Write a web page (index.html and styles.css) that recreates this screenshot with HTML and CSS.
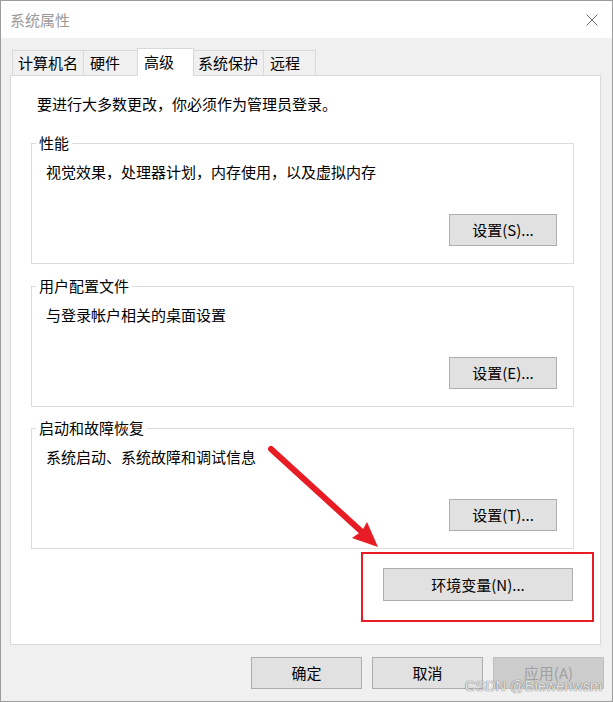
FILE: index.html
```html
<!DOCTYPE html>
<html lang="zh-CN">
<head>
<meta charset="utf-8">
<title>系统属性</title>
<link rel="stylesheet" href="styles.css">
</head>
<body>
<div class="window">
  <div class="titlebar">
    <span class="title">系统属性</span>
    <svg class="close" width="12" height="12" viewBox="0 0 12 12"><path d="M0.5 0.5L11.5 11.5M11.5 0.5L0.5 11.5" stroke="#6e6e6e" stroke-width="1" fill="none"/></svg>
  </div>
  <div class="content">
    <div class="tabs">
      <div class="tab t1">计算机名</div>
      <div class="tab t2">硬件</div>
      <div class="tab t3 active">高级</div>
      <div class="tab t4">系统保护</div>
      <div class="tab t5">远程</div>
    </div>
    <div class="panel">
      <div class="intro">要进行大多数更改，你必须作为管理员登录。</div>
      <div class="group g1">
        <div class="legend">性能</div>
        <div class="desc">视觉效果，处理器计划，内存使用，以及虚拟内存</div>
        <button class="btn set">设置(S)...</button>
      </div>
      <div class="group g2">
        <div class="legend">用户配置文件</div>
        <div class="desc">与登录帐户相关的桌面设置</div>
        <button class="btn set">设置(E)...</button>
      </div>
      <div class="group g3">
        <div class="legend">启动和故障恢复</div>
        <div class="desc">系统启动、系统故障和调试信息</div>
        <button class="btn set">设置(T)...</button>
      </div>
      <button class="btn env">环境变量(N)...</button>
    </div>
    <div class="footer">
      <button class="btn foot">确定</button>
      <button class="btn foot">取消</button>
      <button class="btn foot disabled">应用(A)</button>
    </div>
  </div>
  <svg class="annot" width="613" height="702" viewBox="0 0 613 702">
    <line x1="271" y1="449" x2="362" y2="532" stroke="#e81c24" stroke-width="6" stroke-linecap="round"/>
    <polygon points="378,547 352,538 362,531 367,522" fill="#e81c24"/>
    <rect x="362" y="553" width="231" height="68" fill="none" stroke="#e81c24" stroke-width="2"/>
  </svg>
  <div class="watermark">CSDN @Biewenwsm</div>
</div>
</body>
</html>
```
FILE: styles.css
```css
html, body {
  margin: 0;
  padding: 0;
  background: #ffffff;
}
body {
  font-family: "Noto Sans CJK SC", "Noto Sans", sans-serif;
  font-size: 15px;
  color: #000;
}
.window {
  position: relative;
  width: 613px;
  height: 702px;
  box-sizing: border-box;
  border: 1px solid #9c9c9c;
  background: #f0f0f0;
  display: flex;
  flex-direction: column;
  overflow: hidden;
}
.titlebar {
  height: 37px;
  flex: none;
  background: #fff;
  display: flex;
  align-items: center;
  justify-content: space-between;
  padding: 0 14px 0 9px;
}
.title {
  color: #9a9a9a;
  font-size: 15px;
  line-height: 20px;
}
.close { display: block; }
.content {
  flex: 1;
  display: flex;
  flex-direction: column;
  padding: 12px 10px 0 9px;
}
.tabs {
  display: flex;
  align-items: flex-end;
  height: 25px;
  padding-left: 2px;
}
.tab {
  box-sizing: border-box;
  height: 25px;
  border: 1px solid #d9d9d9;
  border-bottom: none;
  background: #f0f0f0;
  line-height: 23px;
  padding-left: 6px;
  margin-left: -1px;
  white-space: nowrap;
}
.t1 { width: 72px; margin-left: 0; padding-left: 5px; }
.t2 { width: 55px; }
.t3 { width: 57px; }
.t4 { width: 71px; padding-left: 4px; }
.t5 { width: 53px; }
.tab.active {
  position: relative;
  z-index: 1;
  height: 28px;
  margin-bottom: -1px;
  background: #fff;
  line-height: 26px;
}
.panel {
  box-sizing: border-box;
  height: 570px;
  margin-right: 1px;
  background: #fff;
  border: 1px solid #d9d9d9;
  padding: 18px 26px 0 20px;
  display: flex;
  flex-direction: column;
}
.intro {
  line-height: 20px;
  margin-left: 6px;
}
.group {
  box-sizing: border-box;
  height: 121px;
  border: 1px solid #dcdcdc;
  padding: 0 16px 17px 14px;
  display: flex;
  flex-direction: column;
  margin-top: 22px;
}
.g1 { margin-top: 29px; }
.g3 { margin-top: 21px; }
.legend {
  align-self: flex-start;
  margin-top: -11px;
  margin-left: -10px;
  padding: 0 3px;
  background: #fff;
  line-height: 20px;
}
.desc {
  line-height: 20px;
  margin-top: 9px;
}
.btn {
  font-family: "Noto Sans CJK SC", "Noto Sans", sans-serif;
  font-size: 15px;
  color: #000;
  background: #e1e1e1;
  border: 1px solid #adadad;
  box-sizing: border-box;
  padding: 0;
  margin: 0;
  line-height: 20px;
}
.set {
  width: 108px;
  height: 32px;
  margin-top: auto;
  align-self: flex-end;
}
.env {
  width: 190px;
  height: 33px;
  align-self: flex-end;
  margin-top: 19px;
  margin-right: 1px;
}
.footer {
  display: flex;
  justify-content: flex-end;
  gap: 10px;
  padding-top: 12px;
  margin-right: -2px;
}
.foot {
  width: 111px;
  height: 32px;
}
.foot.disabled {
  background: #cccccc;
  border-color: #bfbfbf;
  color: #a0a0a0;
}
.annot {
  position: absolute;
  left: -1px;
  top: -1px;
  pointer-events: none;
}
.watermark {
  position: absolute;
  left: 464px;
  top: 676px;
  font-family: "Liberation Sans", Arial, sans-serif;
  font-size: 14.5px;
  line-height: 18px;
  color: rgba(244, 244, 244, 0.9);
  text-shadow: 0 0 1px #777, 0 0 1px #777;
  white-space: nowrap;
}
```
